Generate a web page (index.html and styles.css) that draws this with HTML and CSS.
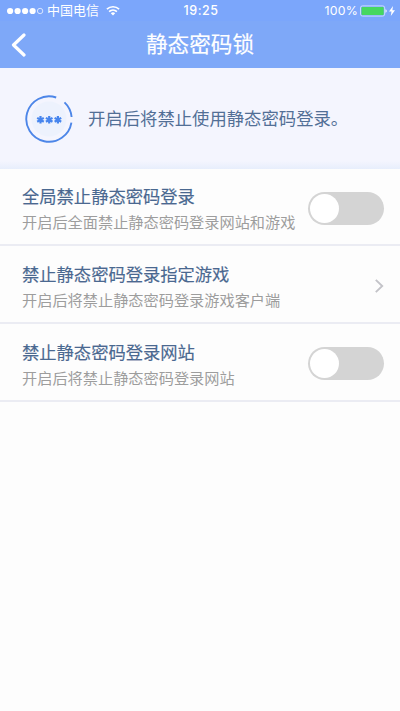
FILE: index.html
```
<!DOCTYPE html>
<html lang="zh-CN">
<head>
<meta charset="utf-8">
<title>静态密码锁</title>
<link rel="stylesheet" href="styles.css">
</head>
<body>
<header class="header">
  <div class="status">
    <div class="status-left">
      <svg class="signal" width="37" height="8" viewBox="0 0 37 8"><g fill="#fff"><circle cx="3.1" cy="4" r="3.1"/><circle cx="10.6" cy="4" r="3.1"/><circle cx="18.1" cy="4" r="3.1"/><circle cx="25.6" cy="4" r="3.1"/></g><circle cx="33.1" cy="4" r="2.7" fill="none" stroke="#fff" stroke-width=".7"/></svg>
      <span class="carrier">中国电信</span>
      <svg class="wifi" width="14" height="11" viewBox="0 0 14 11"><g fill="none" stroke="#fff" stroke-width="1.6"><path d="M.9 4.2a8.8 8.8 0 0 1 12.2 0"/><path d="M3.1 6.7a5.7 5.7 0 0 1 7.8 0"/></g><path d="M4.8 8.2a3.2 3.2 0 0 1 4.4 0L7 10.5z" fill="#fff"/></svg>
    </div>
    <time class="time">19:25</time>
    <div class="status-right">
      <span class="percent">100%</span>
      <svg class="battery" width="27" height="12" viewBox="0 0 27 12"><rect x=".5" y=".9" width="24.2" height="10.2" rx="2" fill="none" stroke="#dbe8ff" stroke-width=".8"/><rect x="1.5" y="1.9" width="22.2" height="8.2" rx="1" fill="#46d760"/><path d="M25.4 4.2c1.9.4 1.9 3.2 0 3.6z" fill="#e8f0ff"/></svg>
      <svg class="bolt" width="6" height="10" viewBox="0 0 6 10"><path d="M4 0 0 5.6h2.5L1.8 10 6 4.2H3.4z" fill="#fff"/></svg>
    </div>
  </div>
  <div class="nav">
    <svg class="back" width="16" height="24" viewBox="0 0 16 24"><path d="M14 2 3.5 12 14 22" fill="none" stroke="#fff" stroke-width="3.2" stroke-linecap="round" stroke-linejoin="round"/></svg>
    <h1 class="title">静态密码锁</h1>
  </div>
</header>
<section class="banner">
  <svg class="lock" width="48" height="48" viewBox="0 0 48 48"><circle cx="24" cy="24" r="17.5" fill="#edf2fd"/><g fill="none" stroke="#4d86e8" stroke-width="1.9"><path d="M46.4 27.6A22.7 22.7 0 1 1 31.2 2.5"/><path d="M39.5 7.4A22.7 22.7 0 0 1 46.6 22"/></g><g stroke="#4785ee" stroke-width="2.2"><path id="star" d="M15.5 21v7.6M12.2 22.9l6.6 3.8M18.8 22.9l-6.6 3.8"/><use href="#star" x="8.7"/><use href="#star" x="17.4"/></g></svg>
  <p class="notice">开启后将禁止使用静态密码登录。</p>
</section>
<main class="list">
  <div class="row">
    <div class="text"><h2 class="name">全局禁止静态密码登录</h2><p class="desc">开启后全面禁止静态密码登录网站和游戏</p></div>
    <div class="switch"><span class="knob"></span></div>
  </div>
  <div class="row">
    <div class="text"><h2 class="name">禁止静态密码登录指定游戏</h2><p class="desc">开启后将禁止静态密码登录游戏客户端</p></div>
    <svg class="arrow" width="9" height="14" viewBox="0 0 9 14"><path d="M.8 .9 7.2 7 .8 13.1" fill="none" stroke="#c3c3c8" stroke-width="1.9"/></svg>
  </div>
  <div class="row">
    <div class="text"><h2 class="name">禁止静态密码登录网站</h2><p class="desc">开启后将禁止静态密码登录网站</p></div>
    <div class="switch"><span class="knob"></span></div>
  </div>
</main>
</body>
</html>
```
FILE: styles.css
```
* { box-sizing: border-box; margin: 0; padding: 0; }
svg { display: block; flex: none; }
body {
  min-height: 711px;
  background: #fdfdfd;
  font-family: "Noto Sans CJK SC", sans-serif;
  overflow: hidden;
}
.header { height: 68px; background: #7ea8f8; color: #fff; }
.status {
  height: 21px;
  display: grid;
  grid-template-columns: 1fr auto 1fr;
  align-items: center;
  padding: 0 5px 0 7px;
  background: #7ba6fb;
}
.status-left, .status-right { display: flex; align-items: center; }
.status-right { justify-content: flex-end; }
.carrier { margin-left: 3px; font-size: 13px; line-height: 20px; padding-bottom: 1px; }
.wifi { margin-left: 7px; }
.time { font: 500 12.5px/20px Inter, sans-serif; letter-spacing: .5px; padding-top: 1px; }
.percent { font: 400 12.3px/20px Inter, sans-serif; letter-spacing: .2px; padding-top: 1px; }
.battery { margin-left: 2px; }
.bolt { margin-left: 2px; }
.nav {
  height: 47px;
  display: grid;
  grid-template-columns: 30px 1fr 30px;
  align-items: center;
  padding: 0 10px;
}
.title { text-align: center; font-size: 21.6px; line-height: 32px; font-weight: 400; -webkit-text-stroke: .2px #fff; padding-bottom: 4px; }
.banner {
  height: 101px;
  display: flex;
  align-items: center;
  padding-left: 25px;
  background: linear-gradient(#f4f5fe 0, #f4f5fe 93px, #e7eefc 101px);
}
.notice { margin-left: 15px; padding-bottom: 2px; font-size: 17.35px; line-height: 26px; color: #526f96; }
.row {
  height: 78px;
  display: flex;
  align-items: center;
  justify-content: space-between;
  padding: 3px 16px 0 22px;
  border-bottom: 2px solid #ebecf3;
}
.row:first-child { height: 77px; }
.name { font-size: 17.3px; line-height: 26px; font-weight: 400; color: #4a6890; -webkit-text-stroke: .15px #4a6890; }
.desc { font-size: 15.2px; line-height: 24px; color: #9d9d9d; white-space: nowrap; }
.arrow { margin-top: 1px; }
.switch {
  width: 76px;
  height: 33px;
  flex: none;
  padding: 2px;
  border-radius: 17px;
  background: #d4d4d4;
}
.knob { display: block; width: 29px; height: 29px; border-radius: 50%; background: #fff; }
```
